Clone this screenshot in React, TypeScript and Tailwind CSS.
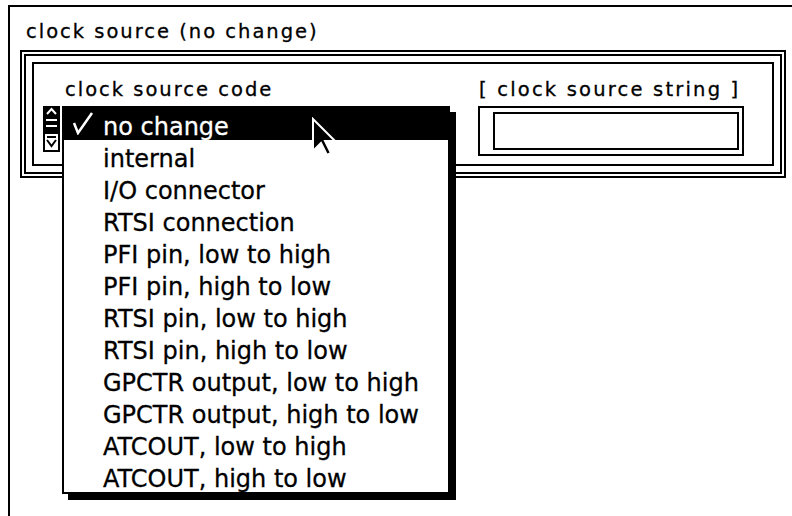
const items = [
  "no change",
  "internal",
  "I/O connector",
  "RTSI connection",
  "PFI pin, low to high",
  "PFI pin, high to low",
  "RTSI pin, low to high",
  "RTSI pin, high to low",
  "GPCTR output, low to high",
  "GPCTR output, high to low",
  "ATCOUT, low to high",
  "ATCOUT, high to low",
];

const Stepper = () => (
  <svg width="17" height="46" viewBox="0 0 17 46" className="block">
    <rect x="0" y="0" width="17" height="27" fill="#000" />
    <polyline points="4,8 8.5,3 13,8" fill="none" stroke="#fff" strokeWidth="2" />
    <rect x="3" y="13" width="11" height="2" fill="#fff" />
    <rect x="3" y="19" width="11" height="2" fill="#fff" />
    <rect x="1" y="27" width="15" height="18" fill="#fff" stroke="#000" strokeWidth="2" />
    <rect x="4" y="30" width="9" height="2" fill="#000" />
    <polyline points="4,34 8.5,40 13,34" fill="none" stroke="#000" strokeWidth="2" />
  </svg>
);

const Cursor = () => (
  <svg width="26" height="40" viewBox="0 0 13 20" className="block">
    <polygon
      points="1,1 1,17 5,13 8,19 10,18 7,12 12,12"
      fill="#000"
      stroke="#fff"
      strokeWidth="1"
      strokeLinejoin="miter"
    />
  </svg>
);

export default function App() {
  return (
    <div className="relative w-[792px] h-[516px] overflow-hidden bg-white text-black font-['DejaVu_Sans',sans-serif] [-webkit-text-stroke:0.3px]">
      <div className="ml-[8px] mt-[5px] h-[511px] border-l-2 border-t-2 border-black">
        <div className="pl-[16px] pt-[13px] text-[19.5px] leading-[24px] tracking-[2px]">
          clock source (no change)
        </div>

        <div className="ml-[10px] mt-[6px] w-[766px] h-[128px] border-2 border-black p-[2px]">
          <div className="h-full border-2 border-black p-[6px]">
            <div className="flex h-full border-2 border-black">
              <div className="w-[444px] pl-[9px] pt-[14px]">
                <div className="ml-[22px] text-[19.5px] leading-[24px] tracking-[2px]">
                  clock source code
                </div>
                <div className="mt-[4px]">
                  <Stepper />
                </div>
              </div>
              <div className="pt-[14px]">
                <div className="ml-[1px] text-[19.5px] leading-[24px] tracking-[2.2px] whitespace-nowrap">
                  [ clock source string ]
                </div>
                <div className="mt-[4px] w-[266px] h-[50px] border-2 border-black pl-[13px] pr-[3px] py-[4px]">
                  <div className="h-full border-2 border-black" />
                </div>
              </div>
            </div>
          </div>
        </div>
      </div>

      {/* open popup menu of the ring */}
      <div className="absolute left-[62px] top-[106px] w-[388px] h-[388px] border-2 border-black bg-white shadow-[6px_6px_0_#000]">
        {items.map((t, i) => (
          <div
            key={t}
            className={
              i === 0
                ? "relative h-[32px] pl-[39px] pt-[6px] leading-[26px] text-[24px] whitespace-nowrap bg-black text-white"
                : "relative h-[32px] pl-[39px] pt-[6px] leading-[26px] text-[24px] whitespace-nowrap"
            }
          >
            {i === 0 && (
              <svg width="22" height="24" viewBox="0 0 22 24" className="absolute left-[8px] top-[3px]">
                <polyline points="2,12 6,22 20,2" fill="none" stroke="#fff" strokeWidth="2.5" />
              </svg>
            )}
            {t}
          </div>
        ))}
      </div>

      <div className="absolute left-[311px] top-[117px]">
        <Cursor />
      </div>
    </div>
  );
}
